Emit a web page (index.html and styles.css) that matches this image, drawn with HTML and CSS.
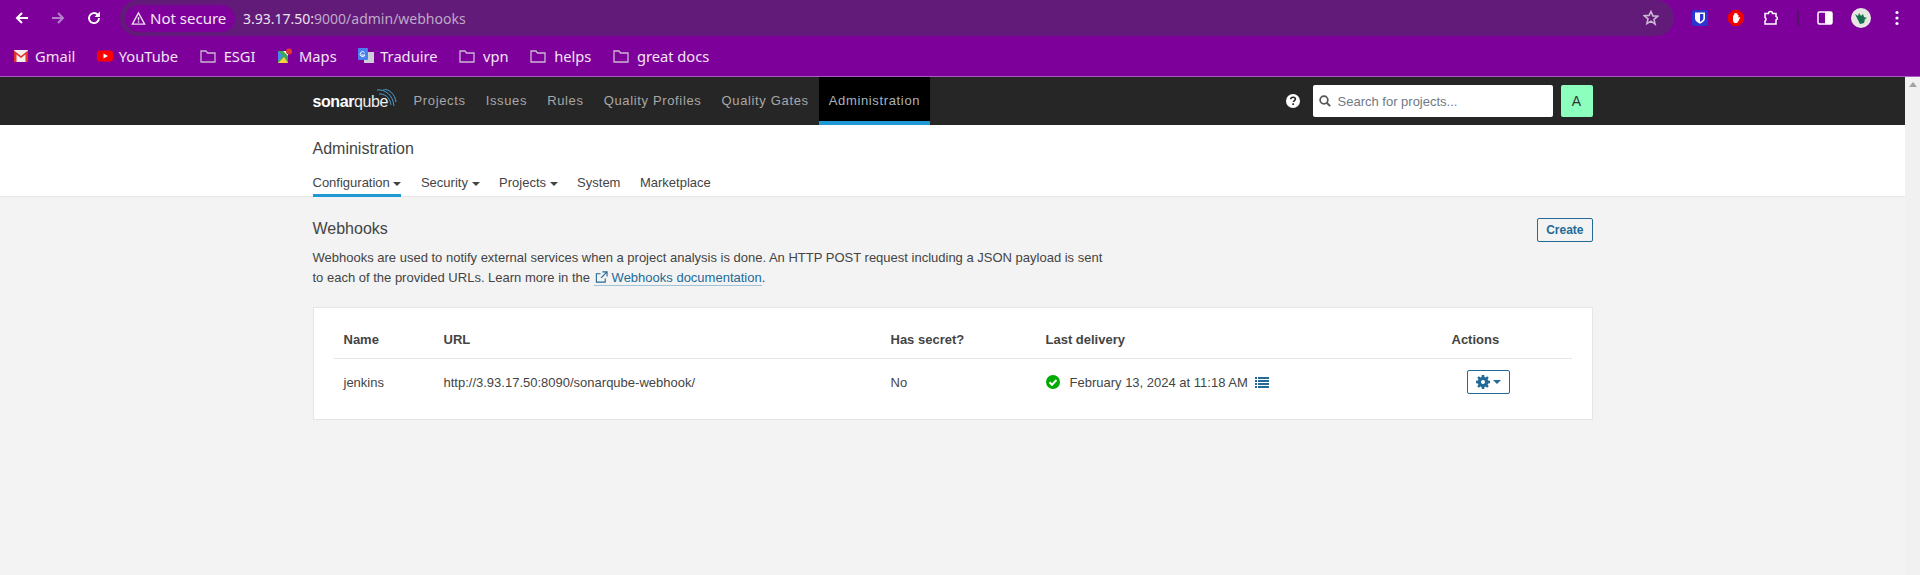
FILE: index.html
```html
<!DOCTYPE html>
<html>
<head>
    <title>Webhooks - Administration</title>
    <link rel="stylesheet" href="styles.css">
</head>
<body>
    <header class="toolbar">
        <div class="nav-btns">
            <svg class="tb-icon" viewBox="0 0 16 16"><path d="M14 8H3M8 3L3 8l5 5" fill="none" stroke="#fff" stroke-width="2"/></svg>
            <svg class="tb-icon" viewBox="0 0 16 16"><path d="M2 8h11M8 3l5 5-5 5" fill="none" stroke="#b57fcd" stroke-width="2"/></svg>
            <svg class="tb-icon" viewBox="0 0 16 16"><path d="M13 8a5 5 0 1 1-1.5-3.5" fill="none" stroke="#fff" stroke-width="1.9"/><path d="M14 1.5V7H8.500z" fill="#fff"/></svg>
        </div>
        <div class="omnibox">
            <div class="chip">
                <svg class="warn" viewBox="0 0 16 16"><path d="M8 2L1.500 14h13zM8 6.500v3.500M8 11v1.500" fill="none" stroke="#eadcf0" stroke-width="1.500"/></svg>
                <span>Not secure</span>
            </div>
            <div class="url">3.93.17.50:<span class="url-rest">9000/admin/webhooks</span></div>
            <svg class="star" viewBox="0 0 16 16"><path d="M8 1.500l1.900 4.400 4.700.4-3.600 3.100 1.100 4.700L8 11.100l-4.100 2.500 1.100-4.700-3.600-3.100 4.700-.4z" fill="none" stroke="#c9b6d2" stroke-width="1.600"/></svg>
        </div>
        <div class="extensions">
            <svg class="ext bitwarden" viewBox="0 0 16 16"><rect width="16" height="16" rx="2" fill="#2b35cf"/><path d="M3 2.500h10v6c0 2.500-2.500 4-5 5.300-2.500-1.300-5-2.800-5-5.300z" fill="#fff"/><path d="M8 4v8c1.500-.9 3.300-2 3.300-3.700V4z" fill="#2b35cf"/></svg>
            <svg class="ext blocker" viewBox="0 0 16 16"><path d="M5 0h6l5 5v6l-5 5H5l-5-5V5z" fill="#f00000"/><path d="M5 7.500V5.500h1V3.500h1V3h1.500v.5h1v1.500h1v3l1-1 .7.5-1.700 3.500-1.500 2H6.500L5 11z" fill="#fff"/></svg>
            <svg class="ext puzzle" viewBox="0 0 16 16"><path d="M1 3.500h3.500a2 2 0 0 1 4 0H12v3a1.800 1.800 0 0 1 0 3.500v4H1v-3a2 2 0 0 0 0-3.500z" fill="none" stroke="#fff" stroke-width="1.500"/></svg>
            <span class="tb-divider"></span>
            <svg class="ext panel" viewBox="0 0 16 16"><rect x="1" y="2" width="14" height="12" rx="1.500" fill="none" stroke="#fff" stroke-width="1.500"/><rect x="8" y="2" width="7" height="12" fill="#fff"/></svg>
            <svg class="avatar-round" viewBox="0 0 20 20"><circle cx="10" cy="10" r="10" fill="#e6e6e2"/><path d="M4 6l3 2 1-3 2 3 2-2 1 3 3 1-2 1-1 4-4 1-2-4z" fill="#16704f"/></svg>
            <svg class="dots" viewBox="0 0 4 16"><circle cx="2" cy="2.500" r="1.600" fill="#fff"/><circle cx="2" cy="8" r="1.600" fill="#fff"/><circle cx="2" cy="13.500" r="1.600" fill="#fff"/></svg>
        </div>
    </header>

    <nav class="bookmarks">
        <a class="bookmark">
            <svg class="bm-icon" viewBox="0 0 16 16"><rect x="1" y="2" width="14" height="12" fill="#f3f0ef"/><path d="M1 14V2.500l7 5.500 7-5.500V14h-2.500V6.500L8 10 3.500 6.500V14z" fill="#e5332a"/></svg>
            Gmail
        </a>
        <a class="bookmark">
            <svg class="bm-icon" viewBox="0 0 16 16"><rect y="2.500" width="16" height="11" rx="3" fill="#f00"/><path d="M6.500 5.500L11 8l-4.500 2.500z" fill="#fff"/></svg>
            YouTube
        </a>
        <a class="bookmark">
            <svg class="bm-icon bm-folder" viewBox="0 0 16 16"><path d="M1 3h5l1.500 2H15v9H1z" fill="none" stroke="#cbb6d4" stroke-width="1.300"/></svg>
            ESGI
        </a>
        <a class="bookmark">
            <svg class="bm-icon" viewBox="0 0 16 16"><path d="M1 3h10v12H1z" fill="#3aa757"/><path d="M1 15l6-6 4 6z" fill="#fbd13e"/><path d="M1 3l5 5-5 5z" fill="#4a87ee"/><path d="M6 3h5v5z" fill="#f4f4f4"/><circle cx="12" cy="3.500" r="3" fill="#e53a2f"/></svg>
            Maps
        </a>
        <a class="bookmark">
            <svg class="bm-icon" viewBox="0 0 16 16"><rect x="6" y="4" width="10" height="11" fill="#cfcfd8"/><rect width="10" height="12" rx="1" fill="#4a7fee"/><path d="M3 7h4M6.500 4.500A2.500 2.500 0 1 0 7 7" fill="none" stroke="#fff"/></svg>
            Traduire
        </a>
        <a class="bookmark">
            <svg class="bm-icon bm-folder" viewBox="0 0 16 16"><path d="M1 3h5l1.500 2H15v9H1z" fill="none" stroke="#cbb6d4" stroke-width="1.300"/></svg>
            vpn
        </a>
        <a class="bookmark">
            <svg class="bm-icon bm-folder" viewBox="0 0 16 16"><path d="M1 3h5l1.500 2H15v9H1z" fill="none" stroke="#cbb6d4" stroke-width="1.300"/></svg>
            helps
        </a>
        <a class="bookmark">
            <svg class="bm-icon bm-folder" viewBox="0 0 16 16"><path d="M1 3h5l1.500 2H15v9H1z" fill="none" stroke="#cbb6d4" stroke-width="1.300"/></svg>
            great docs
        </a>
    </nav>

    <div class="viewport">
        <div class="page">
            <div class="global-nav">
                <div class="container nav-row">
                    <a class="logo">
                        <span class="logo-bold">sonar</span><span class="logo-light">qube</span>
                        <svg class="logo-waves" viewBox="0 0 20 20"><path d="M0 1c8-1 16 5 17 16M2 5c5-.5 11 3 12 11M6 0c6 0 12 5 13 13" fill="none" stroke="#4b9fd5" stroke-width="1"/></svg>
                    </a>
                    <a class="nav-item">Projects</a>
                    <a class="nav-item">Issues</a>
                    <a class="nav-item">Rules</a>
                    <a class="nav-item">Quality Profiles</a>
                    <a class="nav-item">Quality Gates</a>
                    <a class="nav-item active">Administration</a>
                    <svg class="help" viewBox="0 0 14 14"><circle cx="7" cy="7" r="7" fill="#fff"/><path d="M4.700 5.300C4.800 4 5.800 3.200 7.100 3.200c1.400 0 2.300.8 2.300 1.900 0 1-.6 1.400-1.200 1.800-.5.300-.7.600-.7 1.100" fill="none" stroke="#262626" stroke-width="1.600"/><rect x="6.300" y="9.300" width="1.700" height="1.700" fill="#262626"/></svg>
                    <div class="search">
                        <svg class="search-icon" viewBox="0 0 14 14"><circle cx="5.800" cy="5.800" r="4.500" fill="none" stroke="#555" stroke-width="2"/><path d="M9 9l4 4" stroke="#555" stroke-width="2.200"/></svg>
                        <span>Search for projects...</span>
                    </div>
                    <div class="user-avatar">A</div>
                </div>
            </div>

            <div class="sub-nav">
                <div class="container">
                    <h1 class="sub-title">Administration</h1>
                    <div class="tabs">
                        <a class="tab selected">Configuration <i class="caret"></i></a>
                        <a class="tab">Security <i class="caret"></i></a>
                        <a class="tab">Projects <i class="caret"></i></a>
                        <a class="tab">System</a>
                        <a class="tab">Marketplace</a>
                    </div>
                </div>
            </div>

            <main class="container content">
                <div class="page-head">
                    <div>
                        <h2 class="page-title">Webhooks</h2>
                        <p class="page-desc">Webhooks are used to notify external services when a project analysis is done. An HTTP POST request including a JSON payload is sent to each of the provided URLs. Learn more in the <a class="doc-link"><svg class="ext-link" viewBox="0 0 14 14"><path d="M11 8v4H1.500V3H6M8 1h5v5M13 1L6.500 7.500" fill="none" stroke="#236a97" stroke-width="1.200"/></svg>Webhooks documentation</a>.</p>
                    </div>
                    <button class="btn">Create</button>
                </div>

                <div class="card">
                    <table class="data">
                        <thead>
                            <tr>
                                <th class="col-name">Name</th>
                                <th class="col-url">URL</th>
                                <th class="col-secret">Has secret?</th>
                                <th class="col-last">Last delivery</th>
                                <th>Actions</th>
                            </tr>
                        </thead>
                        <tbody>
                            <tr>
                                <td>jenkins</td>
                                <td>http://3.93.17.50:8090/sonarqube-webhook/</td>
                                <td>No</td>
                                <td>
                                    <span class="delivery">
                                        <svg class="ok" viewBox="0 0 14 14"><circle cx="7" cy="7" r="7" fill="#00aa00"/><path d="M3.500 7.200l2.500 2.500 4.500-4.700" fill="none" stroke="#fff" stroke-width="2"/></svg>
                                        February 13, 2024 at 11:18 AM
                                        <svg class="list" viewBox="0 0 14 12"><path d="M0 1h2v2H0zM3 1h11v2H3zM0 4h2v2H0zM3 4h11v2H3zM0 7h2v2H0zM3 7h11v2H3zM0 10h2v2H0zM3 10h11v2H3z" fill="#236a97"/></svg>
                                    </span>
                                </td>
                                <td class="cell-actions">
                                    <button class="btn btn-gear">
                                        <svg class="gear" viewBox="0 0 14 14"><path d="M5.800 0h2.400l.3 1.900 1.100.5L11.200 1.300l1.500 1.500-1.100 1.600.5 1.100 1.900.3v2.400l-1.900.3-.5 1.100 1.100 1.600-1.500 1.500-1.600-1.100-1.100.5-.3 1.900H5.800l-.3-1.900-1.100-.5-1.600 1.100-1.500-1.500 1.100-1.600-.5-1.100L0 8.200V5.800l1.900-.3.500-1.100L1.300 2.800l1.500-1.500 1.600 1.100 1.100-.5z" fill="#236a97"/><circle cx="7" cy="7" r="2" fill="#fff"/></svg>
                                        <i class="caret caret-blue"></i>
                                    </button>
                                </td>
                            </tr>
                        </tbody>
                    </table>
                </div>
            </main>
        </div>
        <div class="scrollbar"><i class="scroll-up"></i></div>
    </div>
</body>
</html>
```

FILE: styles.css
```css
* {
    box-sizing: border-box;
}
html, body {
    height: 100%;
}
body {
    margin: 0;
    display: flex;
    flex-direction: column;
    overflow: hidden;
    font-family: "Liberation Sans", Arial, sans-serif;
    font-size: 13px;
    color: #444;
    background-color: #f3f3f3;
}
svg {
    display: block;
    flex: none;
}

/* browser chrome */
.toolbar {
    height: 36px;
    display: flex;
    align-items: center;
    background-color: #7e009b;
    font-family: "Noto Sans", sans-serif;
}
.nav-btns {
    width: 120px;
    padding-left: 14px;
    display: flex;
    gap: 20px;
}
.tb-icon {
    width: 16px;
    height: 16px;
}
.omnibox {
    width: 1554px;
    height: 36px;
    padding: 0 15px 0 5px;
    display: flex;
    align-items: center;
    background-color: #621b78;
    border-radius: 18px;
}
.chip {
    width: 110px;
    height: 27px;
    padding-left: 6px;
    display: flex;
    align-items: center;
    gap: 4px;
    background-color: #7e009b;
    border-radius: 14px;
    color: #f3e9f7;
    font-size: 15px;
}
.warn {
    width: 15px;
    height: 15px;
}
.url {
    margin-left: 8px;
    flex: 1;
    color: #ece3f0;
    font-size: 14px;
}
.url-rest {
    color: #bfa9c9;
}
.star {
    width: 16px;
    height: 16px;
}
.extensions {
    flex: 1;
    display: flex;
    align-items: center;
    padding-left: 18px;
}
.ext {
    width: 16px;
    height: 16px;
    margin-right: 20px;
}
.tb-divider {
    width: 2px;
    height: 16px;
    margin-right: 18px;
    background-color: #58106f;
}
.puzzle {
    margin-right: 17px;
}
.panel {
    margin-right: 18px;
}
.avatar-round {
    width: 20px;
    height: 20px;
}
.dots {
    width: 4px;
    height: 16px;
    margin-left: 24px;
}
.bookmarks {
    height: 41px;
    padding-left: 13px;
    display: flex;
    align-items: center;
    gap: 21.500px;
    background-color: #7e009b;
    border-bottom: 1px solid #a95bc0;
    font-family: "Noto Sans", sans-serif;
    font-size: 14.700px;
    color: #f1e6f5;
}
.bookmark {
    display: flex;
    align-items: center;
    gap: 6px;
}
.bm-icon {
    width: 16px;
    height: 16px;
}
.bm-folder {
    margin-right: 2px;
}

/* page */
.viewport {
    flex: 1;
    display: flex;
    min-height: 0;
}
.page {
    flex: 1;
    min-width: 0;
}
.scrollbar {
    width: 15px;
    padding-top: 5px;
    display: flex;
    justify-content: center;
    background-color: #f1f1f1;
}
.scroll-up {
    width: 0;
    height: 0;
    border-bottom: 5px solid #a3a3a3;
    border-left: 4px solid transparent;
    border-right: 4px solid transparent;
}
.container {
    width: 1280px;
    margin: 0 auto;
}
.global-nav {
    height: 48px;
    background-color: #262626;
}
.nav-row {
    height: 48px;
    display: flex;
    align-items: center;
}
.logo {
    width: 91px;
    height: 48px;
    position: relative;
    display: block;
    padding-top: 15px;
    color: #fff;
    font-size: 16px;
    line-height: 20px;
    letter-spacing: -0.4px;
    flex: none;
}
.logo-bold {
    font-weight: bold;
}
.logo-light {
    font-weight: normal;
    color: #eee;
}
.logo-waves {
    position: absolute;
    left: 64px;
    top: 12px;
    width: 20px;
    height: 20px;
}
.nav-item {
    height: 48px;
    padding: 0 10px;
    line-height: 47px;
    color: #a8a8a8;
    letter-spacing: 0.650px;
}
.nav-item.active {
    background-color: #000;
    border-bottom: 4px solid #1f98d6;
    color: #a8b4bd;
}
.help {
    width: 14px;
    height: 14px;
    margin-left: auto;
}
.search {
    width: 240px;
    height: 32px;
    margin-left: 13px;
    padding-left: 6px;
    display: flex;
    align-items: center;
    gap: 7px;
    background-color: #fff;
    border-radius: 2px;
    color: #6f7a86;
}
.search-icon {
    width: 12px;
    height: 12px;
}
.user-avatar {
    width: 32px;
    height: 32px;
    margin-left: 8px;
    background-color: #8cffbf;
    border-radius: 2px;
    color: #333;
    font-size: 14px;
    line-height: 32px;
    text-align: center;
}
.sub-nav {
    height: 72px;
    background-color: #fff;
    border-bottom: 1px solid #e6e6e6;
}
.sub-title {
    margin: 0;
    padding-top: 14px;
    font-size: 16px;
    font-weight: normal;
    line-height: 19px;
    color: #444;
}
.tabs {
    margin-top: 16px;
    display: flex;
    gap: 19.500px;
}
.tab {
    height: 23px;
    line-height: 17px;
    color: #444;
}
.tab.selected {
    border-bottom: 3px solid #1f98d6;
}
.caret {
    display: inline-block;
    width: 0;
    height: 0;
    vertical-align: middle;
    border-top: 4px solid #444;
    border-left: 4px solid transparent;
    border-right: 4px solid transparent;
}
.content {
    padding-top: 21px;
}
.page-head {
    display: flex;
    justify-content: space-between;
    align-items: flex-start;
}
.page-title {
    margin: 0 0 8px;
    font-size: 16px;
    font-weight: normal;
    line-height: 22px;
    color: #444;
}
.page-desc {
    width: 800px;
    margin: 0;
    line-height: 20px;
}
.doc-link {
    color: #236a97;
    border-bottom: 1px solid #9fc3da;
}
.ext-link {
    display: inline-block;
    width: 13px;
    height: 13px;
    margin: 0 4px 0 1px;
    vertical-align: -2px;
}
.btn {
    height: 24px;
    padding: 0 8px;
    background-color: transparent;
    border: 1px solid #236a97;
    border-radius: 2px;
    color: #236a97;
    font-family: inherit;
    font-size: 12px;
    font-weight: bold;
}
.card {
    margin-top: 19px;
    padding: 20px 20px 13px;
    background-color: #fff;
    border: 1px solid #e6e6e6;
}
.data {
    width: 100%;
    table-layout: fixed;
    border-collapse: collapse;
}
.data th {
    height: 30px;
    padding: 0 10px 6px;
    border-bottom: 1px solid #e6e6e6;
    font-weight: bold;
    text-align: left;
    color: #444;
}
.data td {
    height: 48px;
    padding: 0 10px;
}
.col-name {
    width: 100px;
}
.col-url {
    width: 447px;
}
.col-secret {
    width: 155px;
}
.col-last {
    width: 406px;
}
.delivery {
    display: flex;
    align-items: center;
    gap: 6px;
}
.ok {
    width: 14px;
    height: 14px;
    margin-right: 4px;
}
.list {
    width: 14px;
    height: 12px;
    margin-left: 1px;
}
.data td.cell-actions {
    padding-left: 25px;
}
.btn-gear {
    width: 43px;
    padding: 0;
    display: flex;
    align-items: center;
    justify-content: center;
    gap: 3px;
}
.gear {
    width: 14px;
    height: 14px;
}
.caret-blue {
    border-top-color: #236a97;
}
```
